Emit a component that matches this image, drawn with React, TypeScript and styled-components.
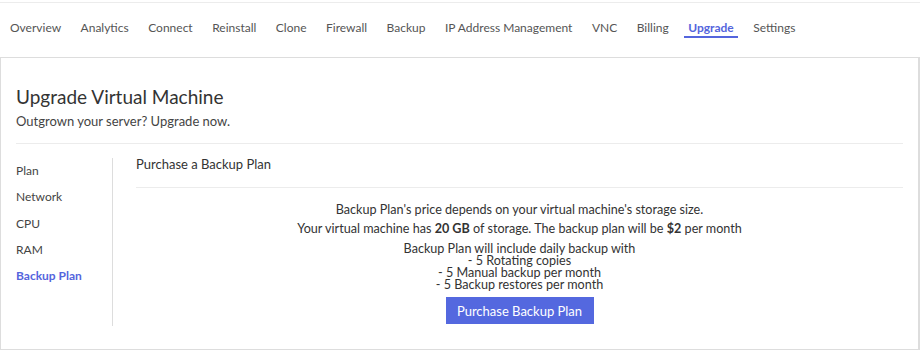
import React from 'react';
import styled, { createGlobalStyle } from 'styled-components';

const GlobalStyle = createGlobalStyle`
  html, body {
    margin: 0;
    padding: 0;
    background: #fff;
  }
  body {
    font-family: Lato, 'Noto Sans', sans-serif;
    color: #444;
  }
`;

const tabs = [
  'Overview',
  'Analytics',
  'Connect',
  'Reinstall',
  'Clone',
  'Firewall',
  'Backup',
  'IP Address Management',
  'VNC',
  'Billing',
  'Upgrade',
  'Settings',
];

const sections = ['Plan', 'Network', 'CPU', 'RAM', 'Backup Plan'];

function App() {
  return (
    <Styled.Root>
      <GlobalStyle />
      <Styled.Nav>
        {tabs.map((t) => (
          <Styled.Tab key={t} $active={t === 'Upgrade'}>
            {t}
          </Styled.Tab>
        ))}
      </Styled.Nav>
      <Styled.Card>
        <Styled.Header>
          <Styled.Title>Upgrade Virtual Machine</Styled.Title>
          <Styled.Subtitle>Outgrown your server? Upgrade now.</Styled.Subtitle>
        </Styled.Header>
        <Styled.Body>
          <Styled.Sidebar>
            {sections.map((s) => (
              <Styled.SideItem key={s} $active={s === 'Backup Plan'}>
                {s}
              </Styled.SideItem>
            ))}
          </Styled.Sidebar>
          <Styled.Content>
            <Styled.Heading>Purchase a Backup Plan</Styled.Heading>
            <Styled.Info>
              <Styled.Line>Backup Plan's price depends on your virtual machine's storage size.</Styled.Line>
              <Styled.Line>
                Your virtual machine has <b>20 GB</b> of storage. The backup plan will be <b>$2</b> per month
              </Styled.Line>
              <Styled.List>
                Backup Plan will include daily backup with
                <br />- 5 Rotating copies
                <br />- 5 Manual backup per month
                <br />- 5 Backup restores per month
              </Styled.List>
              <Styled.Button>Purchase Backup Plan</Styled.Button>
            </Styled.Info>
          </Styled.Content>
        </Styled.Body>
      </Styled.Card>
    </Styled.Root>
  );
}
export default App;

const Styled = {
  Root: styled.div`
    width: 920px;
    padding-top: 2px;
  `,
  Nav: styled.nav`
    display: flex;
    align-items: flex-start;
    gap: 11.5px;
    height: 55px;
    padding: 16px 0 0 6px;
    border-top: 1px solid #ececec;
    box-sizing: border-box;
  `,
  Tab: styled.div<{ $active?: boolean }>`
    position: relative;
    padding: 0 4px;
    font-size: 12px;
    line-height: 18px;
    color: ${(p) => (p.$active ? '#5465dd' : '#555')};
    font-weight: ${(p) => (p.$active ? 700 : 400)};
    white-space: nowrap;

    &:after {
      content: '';
      display: ${(p) => (p.$active ? 'block' : 'none')};
      position: absolute;
      left: 0;
      right: 0;
      bottom: -1px;
      height: 2px;
      background: #5465dd;
    }
  `,
  Card: styled.section`
    border: 1px solid #ddd;
    border-width: 1px 2px 2px 1px;
    padding: 27px 15px 23px 15px;
  `,
  Header: styled.header`
    padding-bottom: 13px;
    border-bottom: 1px solid #ececec;
    margin-bottom: 14px;
  `,
  Title: styled.h1`
    margin: 0;
    font-size: 19px;
    font-weight: 400;
    line-height: 24px;
    color: #333;
  `,
  Subtitle: styled.p`
    margin: 3px 0 0;
    font-size: 13px;
    line-height: 18px;
    color: #444;
  `,
  Body: styled.div`
    display: flex;
  `,
  Sidebar: styled.ul`
    list-style: none;
    margin: 0;
    padding: 0;
    width: 96px;
    border-right: 1px solid #ddd;
  `,
  SideItem: styled.li<{ $active?: boolean }>`
    font-size: 12px;
    line-height: 26.3px;
    color: ${(p) => (p.$active ? '#5465dd' : '#444')};
    font-weight: ${(p) => (p.$active ? 700 : 400)};
  `,
  Content: styled.div`
    flex: 1;
    padding-left: 23px;
  `,
  Heading: styled.h2`
    margin: 0;
    padding-bottom: 16px;
    border-bottom: 1px solid #ececec;
    font-size: 13px;
    font-weight: 400;
    line-height: 13px;
    color: #333;
  `,
  Info: styled.div`
    display: flex;
    flex-direction: column;
    align-items: center;
    text-align: center;
    padding: 12px 0 2px;
    font-size: 12.6px;
    color: #333;
    b {
      font-weight: 700;
    }
  `,
  Line: styled.p`
    margin: 0;
    line-height: 19px;
  `,
  List: styled.p`
    margin: 0;
    padding-top: 5px;
    line-height: 12px;
  `,
  Button: styled.button`
    margin-top: 6px;
    width: 148px;
    height: 27px;
    border: none;
    background: #5468df;
    color: #fff;
    font-family: inherit;
    font-size: 13px;
    cursor: pointer;
  `,
};
